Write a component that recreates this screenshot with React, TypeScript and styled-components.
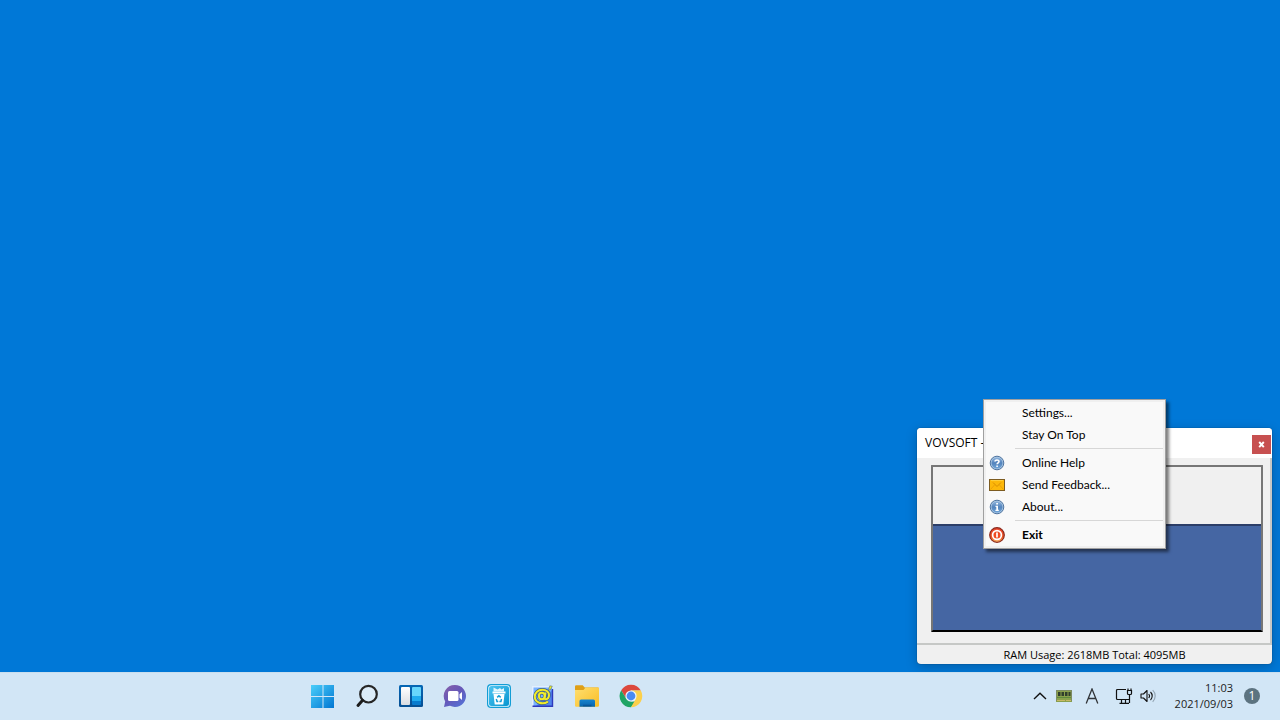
import React from "react";
import styled, { createGlobalStyle } from "styled-components";

const GlobalStyle = createGlobalStyle`
  *, *::before, *::after { box-sizing: border-box; }
  body {
    margin: 0;
    font-family: "Open Sans", "Noto Sans", sans-serif;
    font-size: 12px;
    color: #000;
  }
  button { font: inherit; color: inherit; border: 0; padding: 0; background: none; cursor: default; }
  svg { display: block; }
`;

const Screen = styled.div`
  display: flex;
  flex-direction: column;
  min-height: 100vh;
  background: #0078d7;
`;

const Desktop = styled.main`
  position: relative;
  flex: 1;
  overflow: hidden;
`;

const Window = styled.section`
  position: absolute;
  right: 8px;
  bottom: 8px;
  width: 355px;
  display: flex;
  flex-direction: column;
  border-radius: 4px;
  overflow: hidden;
  background: #f0f0f0;
  box-shadow: 0 0 1px rgba(0, 0, 0, 0.7), 0 3px 12px rgba(0, 0, 0, 0.22);
`;

const TitleBar = styled.header`
  display: flex;
  justify-content: space-between;
  height: 30px;
  padding: 7px 1px 0 8px;
  background: #fff;
`;

const Title = styled.h1`
  margin: 0;
  font-size: 12px;
  line-height: 16px;
  font-weight: 400;
`;

const CloseButton = styled.button`
  width: 19px;
  height: 19px;
  background: #c75050;
  color: #fff;
  display: grid;
  place-items: center;
`;

const WindowBody = styled.div`
  height: 187px;
  padding: 7px 7px 11px 14px;
  border-right: 2px solid #c6c8c6;
  border-bottom: 2px solid #c6c8c6;
`;

const Graph = styled.div`
  display: flex;
  flex-direction: column;
  justify-content: flex-end;
  height: 100%;
  border: 2px solid #767676;
  border-bottom-color: #000;
  border-radius: 1px;
`;

const GraphFill = styled.div`
  border-top: 2px solid #2c3e68;
  background: #4566a3;
`;

const StatusBar = styled.footer`
  height: 19px;
  font-size: 11px;
  line-height: 20px;
  text-align: center;
`;

const Menu = styled.div`
  position: absolute;
  right: 114px;
  bottom: 123px;
  width: 183px;
  border: 1px solid #a0a0a0;
  background: #f9f9f9;
  box-shadow: inset 0 0 0 2px #f0f0f0, 3px 3px 3px rgba(0, 0, 0, 0.5);
  padding: 2px;
  font-family: Lato, "Open Sans", sans-serif;
`;

const MenuItem = styled.button<{ $strong?: boolean }>`
  display: grid;
  grid-template-columns: 16px 1fr;
  column-gap: 17px;
  align-items: center;
  width: 100%;
  height: 22px;
  padding-left: 3px;
  text-align: left;
  line-height: 16px;
  font-weight: ${(p) => (p.$strong ? 700 : 400)};
`;

const Separator = styled.hr`
  height: 1px;
  margin: 2px 0 3px 29px;
  border: 0;
  background: #d7d7d7;
`;

const Taskbar = styled.nav`
  display: flex;
  justify-content: space-between;
  align-items: center;
  height: 48px;
  padding: 0 20px 0 301px;
  background: #d2e6f6;
  box-shadow: inset 0 1px #c9deee;
`;

const Apps = styled.div`
  display: flex;
`;

const AppButton = styled.button`
  display: grid;
  place-items: center;
  width: 44px;
  height: 44px;
`;

const Tray = styled.div`
  display: flex;
  align-items: center;
`;

const TrayButton = styled.button<{ $w?: number }>`
  display: grid;
  place-items: center;
  width: ${(p) => p.$w ?? 24}px;
  height: 32px;
`;

const Clock = styled.time`
  width: 77px;
  margin-right: 11px;
  font-size: 11px;
  line-height: 16px;
  text-align: right;
  color: #1c1c1c;
`;

const Badge = styled.span`
  display: grid;
  place-items: center;
  width: 16px;
  height: 16px;
  border-radius: 50%;
  background: #5c7380;
  color: #fff;
  font-size: 12px;
  line-height: 16px;
`;

const Disc = ({ id }: { id: string }) => (
  <>
    <defs>
      <linearGradient id={id} x1="0" y1="0" x2="0" y2="1">
        <stop offset="0" stopColor="#8fb4dc" />
        <stop offset=".5" stopColor="#5484bd" />
        <stop offset="1" stopColor="#6fa3d6" />
      </linearGradient>
    </defs>
    <circle cx="8" cy="8" r="6.8" fill="#a9c6e2" stroke="#4f74a0" />
    <circle cx="8" cy="8" r="5.5" fill={`url(#${id})`} />
  </>
);

const HelpIcon = () => (
  <svg width="16" height="16" viewBox="0 0 16 16">
    <Disc id="help-disc" />
    <path d="M6 6.600C6 4.400 10 4.400 10 6.500c0 1.300-1.900 1.300-1.900 2.800M8.100 10.500v1.400" fill="none" stroke="#fff" strokeWidth="1.600" />
  </svg>
);

const AboutIcon = () => (
  <svg width="16" height="16" viewBox="0 0 16 16">
    <Disc id="about-disc" />
    <path d="M7.200 4h1.800v1.600H7.200zM6.500 6.700H9v4h.8v1.200H6.400v-1.200h.9V7.900h-.8z" fill="#fff" />
  </svg>
);

const MailIcon = () => (
  <svg width="16" height="16" viewBox="0 0 16 16">
    <rect x=".5" y="2.500" width="15" height="11" fill="#fdb80a" stroke="#7d5c21" />
    <path d="M1.500 12.500 5.500 8M14.500 12.500 10.500 8" stroke="#eda105" />
    <path d="M4 5.500l4 4 4-4" fill="none" stroke="#d98d00" />
    <path d="M2 3.500h12" stroke="#ffcf3c" />
  </svg>
);

const ExitIcon = () => (
  <svg width="16" height="16" viewBox="0 0 16 16">
    <defs>
      <linearGradient id="exit-disc" x1="0" y1="0" x2="0" y2="1">
        <stop offset="0" stopColor="#e8442f" />
        <stop offset=".7" stopColor="#ef5a25" />
        <stop offset="1" stopColor="#ffc36b" />
      </linearGradient>
    </defs>
    <circle cx="8" cy="8" r="7.300" fill="url(#exit-disc)" stroke="#8c2a1d" strokeWidth="1.200" />
    <circle cx="8" cy="8" r="4.400" fill="#ef4b22" stroke="#fff" strokeWidth="1.700" />
    <path d="M8 5.500v5" stroke="#fff" strokeWidth="1.700" />
  </svg>
);

const StartIcon = () => (
  <svg width="24" height="24" viewBox="0 0 24 24">
    <defs>
      <linearGradient id="start-blue" gradientUnits="userSpaceOnUse" x1="0" y1="0" x2="24" y2="24">
        <stop offset="0" stopColor="#4bd0fb" />
        <stop offset="1" stopColor="#0074d1" />
      </linearGradient>
    </defs>
    <path d="M0 1h11.500v11H0zM12.500 1H23v11H12.500zM0 13h11.500v11H0zM12.500 13H23v11H12.500z" fill="url(#start-blue)" />
  </svg>
);

const SearchIcon = () => (
  <svg width="24" height="24" viewBox="0 0 24 24">
    <circle cx="13.500" cy="10.200" r="8.300" fill="#dcecf8" stroke="#262626" strokeWidth="2.200" />
    <path d="M7.600 16.300 3 21.500" stroke="#1c1c1c" strokeWidth="3" strokeLinecap="round" />
  </svg>
);

const WidgetsIcon = () => (
  <svg width="24" height="24" viewBox="0 0 24 24">
    <defs>
      <linearGradient id="widget-frame" x1="0" y1="0" x2="0" y2="1">
        <stop offset="0" stopColor="#0667b5" />
        <stop offset="1" stopColor="#064f93" />
      </linearGradient>
      <linearGradient id="widget-pane" x1="0" y1="0" x2="0" y2="1">
        <stop offset="0" stopColor="#fff" />
        <stop offset="1" stopColor="#d9dde2" />
      </linearGradient>
    </defs>
    <rect y="1" width="24" height="22" rx="1.500" fill="url(#widget-frame)" />
    <rect x="2" y="3" width="9" height="18" rx="1" fill="url(#widget-pane)" />
    <path d="M13 4a1 1 0 0 1 1-1h7a1 1 0 0 1 1 1v8h-9z" fill="#67d6fc" />
    <path d="M13 12h9v5h-9z" fill="#20abef" />
    <path d="M13 17h9v3a1 1 0 0 1-1 1h-7a1 1 0 0 1-1-1z" fill="#087bce" />
  </svg>
);

const ChatIcon = () => (
  <svg width="24" height="24" viewBox="0 0 24 24">
    <defs>
      <linearGradient id="chat-bubble" x1="0" y1="0" x2=".8" y2="1">
        <stop offset="0" stopColor="#8960a9" />
        <stop offset=".5" stopColor="#6658b8" />
        <stop offset="1" stopColor="#5572d6" />
      </linearGradient>
    </defs>
    <path d="M12 1a11 11 0 1 1-5 20.800L1 23l1.200-5.600A11 11 0 0 1 12 1z" fill="url(#chat-bubble)" />
    <rect x="5" y="7" width="10.500" height="10" rx="1.500" fill="#fff" />
    <path d="M16.500 10.200 19 8v8l-2.500-2.200z" fill="#fff" />
  </svg>
);

const BinIcon = () => (
  <svg width="24" height="24" viewBox="0 0 24 24">
    <defs>
      <linearGradient id="bin-tile" x1="0" y1="0" x2="1" y2="1">
        <stop offset="0" stopColor="#4fc5f1" />
        <stop offset="1" stopColor="#0795d0" />
      </linearGradient>
    </defs>
    <rect x=".6" y=".6" width="22.800" height="22.800" rx="3.500" fill="#e7f8ff" stroke="#139dd5" strokeWidth="1.200" />
    <rect x="2" y="2" width="20" height="20" rx="2.500" fill="url(#bin-tile)" />
    <path d="M6.500 10h11L16.300 20.500H7.700zM5.500 7.500h13v2h-13z" fill="#fff" />
    <path d="m6.500 7.500 0-4 4 2L13 4l1.500 1.500L17 4v3.500z" fill="#e3f6fd" />
    <path d="m10.200 13.400 1.700-1.700 1.800 1.700M14.500 15l-.6 2.600h-1.500M9.300 15l.7 2.600h1.300" fill="none" stroke="#139dd5" strokeWidth="1.500" />
  </svg>
);

const AT_TAIL = "M14.600 8.500l-1 5c-.5 2.800 4 2.300 4.400-1.800.4-4-3-6-6.700-6-4.300 0-7.500 3-7.500 6.900 0 6.400 7.700 8.400 13.200 5";

const MailerIcon = () => (
  <svg width="24" height="24" viewBox="0 0 24 24">
    <path d="M1 2h20v20H1z" fill="#79b3ff" />
    <path d="M1 22V2h20v1.500H2.500V22z" fill="#e3efff" />
    <path d="M21 6v16H5z" fill="#5186ec" />
    <path d="M1.500 22.300h20V5" fill="none" stroke="#2e39bd" strokeWidth="1.400" />
    <ellipse cx="10.800" cy="12" rx="2.900" ry="3.200" fill="none" stroke="#3c5f86" strokeWidth="3.400" />
    <path d={AT_TAIL} fill="none" stroke="#3c5f86" strokeWidth="3.400" />
    <ellipse cx="10.800" cy="12" rx="2.900" ry="3.200" fill="none" stroke="#f1ec29" strokeWidth="2" />
    <path d={AT_TAIL} fill="none" stroke="#f1ec29" strokeWidth="2" />
    <path d="m17.500 5.500 1.300-3.700 2.500.4-2 3.800z" fill="#f1ec29" stroke="#3c5f86" strokeWidth=".5" />
  </svg>
);

const FolderIcon = () => (
  <svg width="26" height="24" viewBox="0 0 26 24">
    <defs>
      <linearGradient id="folder-face" x1="0" y1="0" x2="1" y2="1">
        <stop offset="0" stopColor="#ffdf70" />
        <stop offset="1" stopColor="#f9bd25" />
      </linearGradient>
      <linearGradient id="folder-stand" x1="0" y1="0" x2="0" y2="1">
        <stop offset="0" stopColor="#1683cf" />
        <stop offset="1" stopColor="#0865ac" />
      </linearGradient>
    </defs>
    <path d="M1 2.500A1.200 1.200 0 0 1 2.200 1.300h6.500l2 2.200h13A1.300 1.300 0 0 1 25 4.800V12H1z" fill="#dfa017" />
    <path d="M1 6h8.500l2-2.500H24a1 1 0 0 1 1 1v17a1.300 1.300 0 0 1-1.300 1.300H2.300A1.300 1.300 0 0 1 1 21.500z" fill="url(#folder-face)" />
    <path d="M5.500 22.800V17a1.500 1.500 0 0 1 1.500-1.500h12.500A1.500 1.500 0 0 1 21 17v5.800z" fill="url(#folder-stand)" />
    <path d="M9 21.500h8.500" stroke="#07559a" strokeWidth="1.600" />
  </svg>
);

const ChromeIcon = () => (
  <svg width="24" height="24" viewBox="0 0 24 24">
    <path d="M2.200 6.300A11.300 11.300 0 0 1 21.800 6.400H12L7.200 14.800z" fill="#dc483d" />
    <path d="M2.200 6.300 7.200 14.800 12 17.600h4.900L12 23.300A11.300 11.300 0 0 1 2.200 6.300z" fill="#20a464" />
    <path d="M12 6.400h9.800A11.300 11.300 0 0 1 12 23.300l4.900-8.500z" fill="#fcd04b" />
    <circle cx="12" cy="12" r="5.600" fill="#eef6fb" />
    <circle cx="12" cy="12" r="4.400" fill="#4a8af4" />
  </svg>
);

const ChevronIcon = () => (
  <svg width="14" height="10" viewBox="0 0 14 10">
    <path d="m1 8 6-5.700L13 8" fill="none" stroke="#111" strokeWidth="1.400" />
  </svg>
);

const MemoryIcon = () => (
  <svg width="16" height="12" viewBox="0 0 16 12">
    <path d="M0 0h16v12H0z" fill="#8aa04c" />
    <path d="M0 .5h16M.5 0v11M15.500 0v11" stroke="#7d8c63" />
    <path d="M2 2h2.500v4H2zM5.500 2H8v4H5.500zM9 2h2.500v4H9zM12.500 2h2v4h-2z" fill="#303d2c" />
    <path d="M1 7.500h14" stroke="#5f8a3c" />
    <path d="M1 10.500h8M10 10.500h5" stroke="#c8b964" />
  </svg>
);

const InputModeIcon = () => (
  <svg width="14" height="16" viewBox="0 0 14 16">
    <path d="M1.200 15.500 7 1l5.800 14.500M3.200 10.500h7.600" fill="none" stroke="#303438" strokeWidth="1.300" />
  </svg>
);

const NetworkIcon = () => (
  <svg width="18" height="16" viewBox="0 0 18 16">
    <path d="M11 1.500H2.500a1 1 0 0 0-1 1v8a1 1 0 0 0 1 1h11.500M6.500 11.500v3.500M10.500 11.500v3.500M4.500 15.300h9.500" fill="none" stroke="#111" strokeWidth="1.200" />
    <path d="M12.500 2.500h4v3a1 1 0 0 1-1 1h-2a1 1 0 0 1-1-1zM13 2.500V.5M16 2.500V.5M14.500 6.500V15" fill="none" stroke="#111" strokeWidth="1.200" />
  </svg>
);

const VolumeIcon = () => (
  <svg width="16" height="14" viewBox="0 0 16 14">
    <path d="M1 5h2.500l3.500-3.500v11L3.500 9H1z" fill="none" stroke="#111" strokeWidth="1.100" strokeLinejoin="round" />
    <path d="M8.700 5a3 3 0 0 1 0 4M10.500 3a5.600 5.600 0 0 1 0 8" fill="none" stroke="#111" strokeWidth="1.100" />
    <path d="M12.700 1.200a8 8 0 0 1 0 11.600" fill="none" stroke="#91a3b1" strokeWidth="1.100" />
  </svg>
);

const CloseGlyph = () => (
  <svg width="7" height="7" viewBox="0 0 7 7">
    <path d="M1.200 1 5.800 6.200M5.800 1 1.200 6.200" stroke="#fff" strokeWidth="1.900" />
  </svg>
);

const apps = [
  { name: "Start", icon: <StartIcon /> },
  { name: "Search", icon: <SearchIcon /> },
  { name: "Widgets", icon: <WidgetsIcon /> },
  { name: "Chat", icon: <ChatIcon /> },
  { name: "Uninstaller", icon: <BinIcon /> },
  { name: "Mail", icon: <MailerIcon /> },
  { name: "File Explorer", icon: <FolderIcon /> },
  { name: "Chrome", icon: <ChromeIcon /> },
];

const usedPercent = 65;

export default function App() {
  return (
    <Screen>
      <GlobalStyle />
      <Desktop>
        <Window>
          <TitleBar>
            <Title>VOVSOFT -</Title>
            <CloseButton aria-label="Close">
              <CloseGlyph />
            </CloseButton>
          </TitleBar>
          <WindowBody>
            <Graph>
              <GraphFill style={{ height: `${usedPercent}%` }} />
            </Graph>
          </WindowBody>
          <StatusBar>RAM Usage: 2618MB Total: 4095MB</StatusBar>
        </Window>
        <Menu role="menu">
          <MenuItem role="menuitem"><span />Settings...</MenuItem>
          <MenuItem role="menuitem"><span />Stay On Top</MenuItem>
          <Separator />
          <MenuItem role="menuitem"><HelpIcon />Online Help</MenuItem>
          <MenuItem role="menuitem"><MailIcon />Send Feedback...</MenuItem>
          <MenuItem role="menuitem"><AboutIcon />About...</MenuItem>
          <Separator />
          <MenuItem role="menuitem" $strong><ExitIcon />Exit</MenuItem>
        </Menu>
      </Desktop>
      <Taskbar>
        <Apps>
          {apps.map((app) => (
            <AppButton key={app.name} aria-label={app.name}>{app.icon}</AppButton>
          ))}
        </Apps>
        <Tray>
          <TrayButton aria-label="Show hidden icons"><ChevronIcon /></TrayButton>
          <TrayButton aria-label="Memory"><MemoryIcon /></TrayButton>
          <TrayButton $w={32} aria-label="Input mode"><InputModeIcon /></TrayButton>
          <TrayButton $w={32} aria-label="Network"><NetworkIcon /></TrayButton>
          <TrayButton $w={16} aria-label="Volume"><VolumeIcon /></TrayButton>
          <Clock dateTime="2021-09-03T11:03">11:03<br />2021/09/03</Clock>
          <Badge>1</Badge>
        </Tray>
      </Taskbar>
    </Screen>
  );
}
